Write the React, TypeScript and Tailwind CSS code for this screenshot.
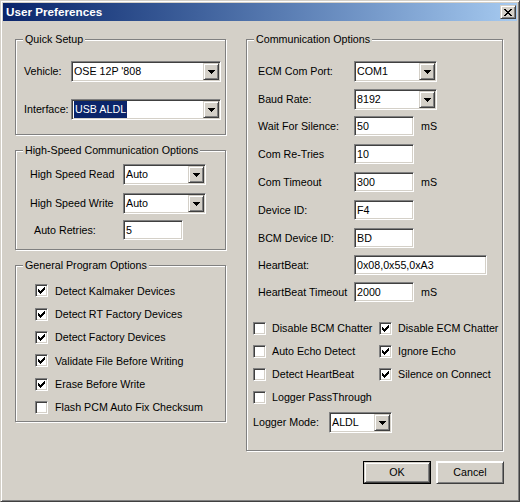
import type { ReactNode } from "react"

// classic win2k bevels
const sunken =
  "border border-t-[#808080] border-l-[#808080] border-b-white border-r-white shadow-[inset_1px_1px_0_#404040,inset_-1px_-1px_0_#d4d0c8]"
const raised =
  "border border-t-[#d4d0c8] border-l-[#d4d0c8] border-b-[#404040] border-r-[#404040] shadow-[inset_1px_1px_0_#fff,inset_-1px_-1px_0_#808080] bg-[#d4d0c8]"

function Group({ title, className, children }: { title: string; className: string; children: ReactNode }) {
  return (
    <div className={`relative border border-[#808080] shadow-[inset_1px_1px_0_#fff,1px_1px_0_#fff] ${className}`}>
      <span className="absolute left-[7px] top-[-8px] bg-[#d4d0c8] px-[2px] leading-[14px]">{title}</span>
      {children}
    </div>
  )
}

function Arrow() {
  return (
    <svg width="7" height="4" viewBox="0 0 7 4" shapeRendering="crispEdges">
      <rect x="0" y="0" width="7" height="1" fill="#000" />
      <rect x="1" y="1" width="5" height="1" fill="#000" />
      <rect x="2" y="2" width="3" height="1" fill="#000" />
      <rect x="3" y="3" width="1" height="1" fill="#000" />
    </svg>
  )
}

function Combo({ value, width, selected }: { value: string; width: string; selected?: boolean }) {
  return (
    <div className={`flex h-[21px] shrink-0 bg-white p-px ${sunken} ${width}`}>
      <div className="flex flex-1 items-center overflow-hidden pl-px">
        <span className={selected ? "bg-[#0a246a] px-px text-white" : ""}>{value}</span>
      </div>
      <div className={`flex h-[17px] w-[16px] items-center justify-center ${raised}`}>
        <Arrow />
      </div>
    </div>
  )
}

function Field({ value, width }: { value: string; width: string }) {
  return (
    <div className={`flex h-[20px] shrink-0 items-center bg-white p-px pl-[2px] ${sunken} ${width}`}>
      {value}
    </div>
  )
}

const checkCols = [
  [2, 4],
  [3, 5],
  [4, 6],
  [5, 5],
  [6, 4],
  [7, 3],
  [8, 2],
]

function Check({ checked, label, gap }: { checked: boolean; label: string; gap: string }) {
  return (
    <div className={`flex items-center ${gap}`}>
      <div className={`h-[13px] w-[13px] shrink-0 bg-white ${sunken}`}>
        {checked && (
          <svg width="11" height="11" viewBox="0 0 11 11" shapeRendering="crispEdges">
            {checkCols.map(([x, y]) => (
              <rect key={x} x={x} y={y} width="1" height="3" fill="#000" />
            ))}
          </svg>
        )}
      </div>
      <span className="whitespace-nowrap">{label}</span>
    </div>
  )
}

const programOptions = [
  { label: "Detect Kalmaker Devices", checked: true, h: "h-[24px]" },
  { label: "Detect RT Factory Devices", checked: true, h: "h-[23px]" },
  { label: "Detect Factory Devices", checked: true, h: "h-[23px]" },
  { label: "Validate File Before Writing", checked: true, h: "h-[24px]" },
  { label: "Erase Before Write", checked: true, h: "h-[23px]" },
  { label: "Flash PCM Auto Fix Checksum", checked: false, h: "h-[23px]" },
]

type CommRow = { label: string; kind: "combo" | "field"; value: string; width: string; mt: string; unit?: string }

const commRows: CommRow[] = [
  { label: "ECM Com Port:", kind: "combo", value: "COM1", width: "w-[83px]", mt: "mt-0" },
  { label: "Baud Rate:", kind: "combo", value: "8192", width: "w-[83px]", mt: "mt-[7px]" },
  { label: "Wait For Silence:", kind: "field", value: "50", width: "w-[60px]", mt: "mt-[6px]", unit: "mS" },
  { label: "Com Re-Tries", kind: "field", value: "10", width: "w-[60px]", mt: "mt-[8px]" },
  { label: "Com Timeout", kind: "field", value: "300", width: "w-[60px]", mt: "mt-[8px]", unit: "mS" },
  { label: "Device ID:", kind: "field", value: "F4", width: "w-[60px]", mt: "mt-[8px]" },
  { label: "BCM Device ID:", kind: "field", value: "BD", width: "w-[60px]", mt: "mt-[8px]" },
  { label: "HeartBeat:", kind: "field", value: "0x08,0x55,0xA3", width: "w-[133px]", mt: "mt-[7px]" },
  { label: "HeartBeat Timeout", kind: "field", value: "2000", width: "w-[60px]", mt: "mt-[7px]", unit: "mS" },
]

const commChecks = [
  [
    { label: "Disable BCM Chatter", checked: false },
    { label: "Disable ECM Chatter", checked: true },
  ],
  [
    { label: "Auto Echo Detect", checked: false },
    { label: "Ignore Echo", checked: true },
  ],
  [
    { label: "Detect HeartBeat", checked: false },
    { label: "Silence on Connect", checked: true },
  ],
  [{ label: "Logger PassThrough", checked: false }],
]

export default function App() {
  return (
    <div className="h-[502px] w-[520px] font-['Liberation_Sans',Arial,sans-serif] text-[10.7px] text-black">
      <div
        className={`flex h-full w-full flex-col border border-t-[#d4d0c8] border-l-[#d4d0c8] border-b-[#404040] border-r-[#404040] bg-[#d4d0c8] p-[2px] shadow-[inset_1px_1px_0_#fff,inset_-1px_-1px_0_#808080]`}
      >
        {/* Title bar */}
        <div className="flex h-[18px] shrink-0 items-center bg-linear-to-r from-[#0a246a] to-[#a6caf0] pl-[3px] pr-[1px]">
          <span className="flex-1 text-[11.7px] font-bold text-white">User Preferences</span>
          <div className={`flex h-[14px] w-[16px] items-center justify-center ${raised}`}>
            <svg width="8" height="7" viewBox="0 0 8 7" shapeRendering="crispEdges">
              <path d="M0 0h2l2 2.5 2-2.5h2l-3 3.5 3 3.5h-2l-2-2.5-2 2.5h-2l3-3.5z" fill="#000" />
            </svg>
          </div>
        </div>

        <div className="flex pl-[12px] pt-[18px]">
          {/* Left column */}
          <div className="flex w-[211px] flex-col">
            <Group title="Quick Setup" className="h-[96px]">
              <div className="flex flex-col gap-[17px] pl-[8px] pt-[21px]">
                <div className="flex items-center">
                  <span className="w-[47px]">Vehicle:</span>
                  <Combo value="OSE 12P '808" width="w-[150px]" />
                </div>
                <div className="flex items-center">
                  <span className="w-[47px]">Interface:</span>
                  <Combo value="USB ALDL" width="w-[150px]" selected />
                </div>
              </div>
            </Group>

            <Group title="High-Speed Communication Options" className="mt-[15px] h-[100px]">
              <div className="flex flex-col pl-[14px] pt-[13px]">
                <div className="flex items-center">
                  <span className="w-[93px]">High Speed Read</span>
                  <Combo value="Auto" width="w-[83px]" />
                </div>
                <div className="mt-[8px] flex items-center">
                  <span className="w-[93px]">High Speed Write</span>
                  <Combo value="Auto" width="w-[83px]" />
                </div>
                <div className="mt-[6px] flex items-center">
                  <span className="w-[93px] pl-[4px]">Auto Retries:</span>
                  <Field value="5" width="w-[60px]" />
                </div>
              </div>
            </Group>

            <Group title="General Program Options" className="mt-[15px] h-[157px]">
              <div className="flex flex-col pl-[19px] pt-[13px]">
                {programOptions.map((o) => (
                  <div key={o.label} className={`flex items-center ${o.h}`}>
                    <Check checked={o.checked} label={o.label} gap="gap-[7px]" />
                  </div>
                ))}
              </div>
            </Group>
          </div>

          {/* Right column */}
          <div className="ml-[20px] flex w-[257px] flex-col">
            <Group title="Communication Options" className="h-[412px]">
              <div className="flex flex-col pl-[11px] pt-[21px]">
                {commRows.map((r) => (
                  <div key={r.label} className={`flex items-center ${r.mt}`}>
                    <span className="w-[96px] whitespace-nowrap">{r.label}</span>
                    {r.kind === "combo" ? (
                      <Combo value={r.value} width={r.width} />
                    ) : (
                      <Field value={r.value} width={r.width} />
                    )}
                    {r.unit && <span className="ml-[7px]">{r.unit}</span>}
                  </div>
                ))}
              </div>

              <div className="mt-[15px] flex flex-col pl-[6px]">
                {commChecks.map((row, i) => (
                  <div key={i} className="flex h-[23px] items-center">
                    <div className="w-[126px]">
                      <Check checked={row[0].checked} label={row[0].label} gap="gap-[6px]" />
                    </div>
                    {row[1] && <Check checked={row[1].checked} label={row[1].label} gap="gap-[6px]" />}
                  </div>
                ))}
                <div className="mt-[3px] flex items-center">
                  <span className="w-[76px]">Logger Mode:</span>
                  <Combo value="ALDL" width="w-[63px]" />
                </div>
              </div>
            </Group>

            <div className="mr-[-1px] mt-[10px] flex justify-end gap-[5px]">
              <button className="h-[23px] w-[68px] border border-black bg-[#d4d0c8] p-0">
                <div className={`flex h-full w-full items-center justify-center ${raised}`}>OK</div>
              </button>
              <button className={`flex h-[23px] w-[68px] items-center justify-center ${raised} border-t-white border-l-white`}>
                Cancel
              </button>
            </div>
          </div>
        </div>
      </div>
    </div>
  )
}
